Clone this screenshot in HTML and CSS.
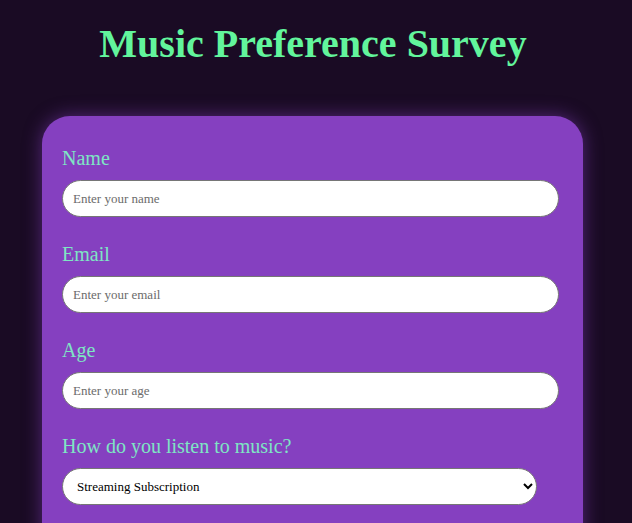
FILE: index.html
```html
<!DOCTYPE html>
<html lang="en">
<head>
    <meta charset="UTF-8">
    <meta name="viewport" content="width=device-width, initial-scale=1.0">
    <title>Music Preference Survey</title>
    <link rel="stylesheet" href="styles.css">
</head>
<body>
    <h1 class="page-title">Music Preference Survey</h1>

    <form class="survey-card">
        <div class="field">
            <label class="field-label" for="name">Name</label>
            <input class="field-input" type="text" id="name" placeholder="Enter your name">
        </div>

        <div class="field">
            <label class="field-label" for="email">Email</label>
            <input class="field-input" type="email" id="email" placeholder="Enter your email">
        </div>

        <div class="field">
            <label class="field-label" for="age">Age</label>
            <input class="field-input" type="number" id="age" placeholder="Enter your age">
        </div>

        <div class="field">
            <label class="field-label" for="listen">How do you listen to music?</label>
            <select class="field-select" id="listen">
                <option>Streaming Subscription</option>
                <option>Radio</option>
                <option>Vinyl / CD</option>
                <option>Live Concerts</option>
            </select>
        </div>
    </form>
</body>
</html>
```

FILE: styles.css
```css
/* base */
* {
    box-sizing: border-box;
}

body {
    margin: 0;
    background-color: #1a0b24;
    font-family: "Liberation Serif", "Times New Roman", serif;
}

/* title */
.page-title {
    margin: 20px 6px 0 0;
    text-align: center;
    font-size: 40px;
    font-weight: bold;
    color: #62f59c;
}

/* survey card */
.survey-card {
    width: 541px;
    margin: 49px 0 0 42px;
    padding: 31px 24px 30px 20px;
    background-color: #8540c0;
    border-radius: 28px;
    box-shadow: 0 0 18px rgba(133, 64, 192, 0.55);
}

.field {
    margin-bottom: 26px;
}

.field-label {
    display: block;
    margin-bottom: 10px;
    font-size: 20px;
    line-height: 23px;
    color: #7ee6c4;
}

.field-input,
.field-select {
    display: block;
    height: 37px;
    padding: 0 10px;
    border: 1px solid #767676;
    border-radius: 19px;
    background-color: #ffffff;
    font-family: inherit;
    font-size: 13px;
    color: #000000;
}

.field-input {
    width: 497px;
}

.field-input::placeholder {
    color: #6b6b6b;
}

.field-select {
    width: 475px;
}
```
